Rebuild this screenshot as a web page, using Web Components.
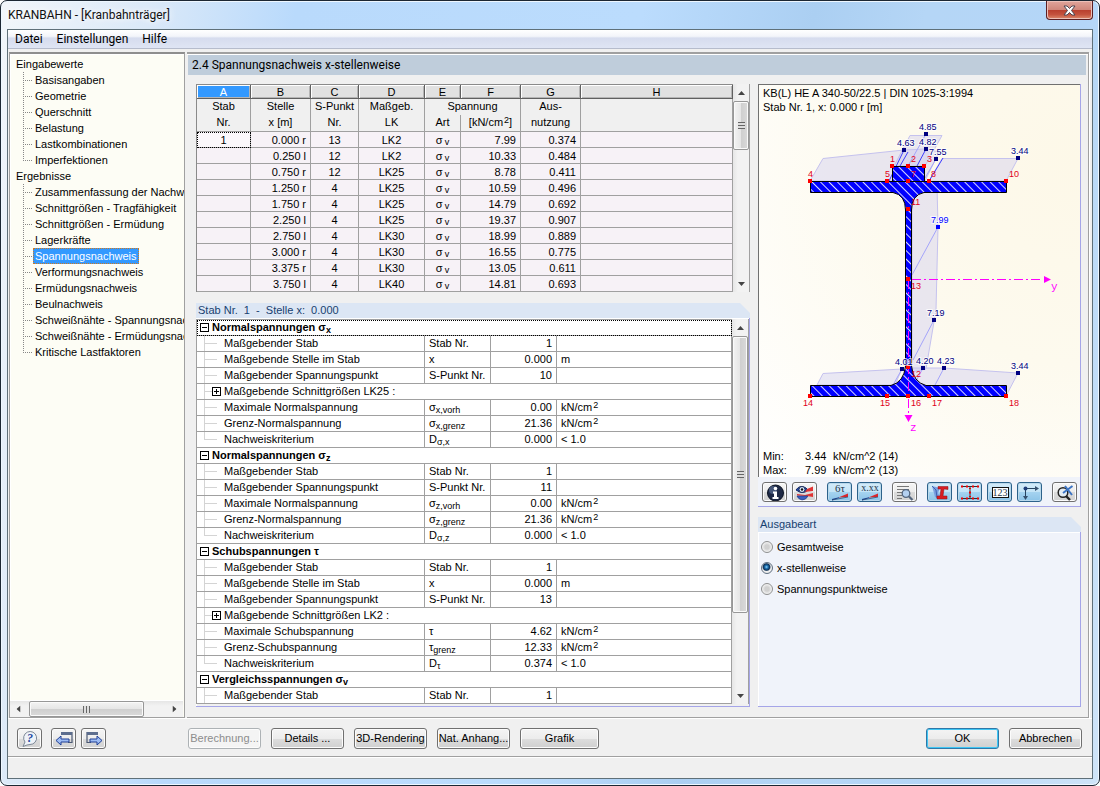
<!DOCTYPE html>
<html lang="de">
<head>
<meta charset="utf-8">
<title>KRANBAHN - [Kranbahnträger]</title>
<style>
  html, body { margin: 0; }
  body { background: #fff; color: #000; font: 11px/16px "Liberation Sans", Arial, sans-serif; }
</style>
</head>
<body>
<kb-window>
  <span slot="title">KRANBAHN - [Kranbahnträger]</span>
  <kb-menubar slot="menu">
    <a href="#datei">Datei</a><a href="#einstellungen">Einstellungen</a><a href="#hilfe">Hilfe</a>
  </kb-menubar>
  <kb-tree slot="nav"></kb-tree>
  <kb-page slot="page">
    <span slot="heading">2.4 Spannungsnachweis x-stellenweise</span>
    <result-table slot="results"></result-table>
    <kb-group slot="details" flush><span slot="caption">Stab Nr.&nbsp; 1&nbsp; -&nbsp; Stelle x:&nbsp; 0.000</span><detail-table></detail-table></kb-group>
    <section-view slot="view"></section-view>
    <kb-group slot="options"><span slot="caption">Ausgabeart</span><output-mode></output-mode></kb-group>
  </kb-page>
  <kb-actions slot="actions"></kb-actions>
</kb-window>

<script>
const define = (name, html, setup) => {
  const t = document.createElement('template');
  t.innerHTML = html;
  customElements.define(name, class extends HTMLElement {
    constructor() {
      super();
      this.attachShadow({ mode: 'open' }).append(t.content.cloneNode(true));
    }
    connectedCallback() { if (setup && !this.ready) { this.ready = true; setup(this.shadowRoot, this); } }
  });
};

/* ---------- window frame ---------- */
define('kb-window', `
<style>
  :host { display: block; }
  .frame { box-sizing: border-box; min-height: 100vh; display: grid; grid-template-rows: 28px 1fr;
    border: 1px solid #1c2733; border-radius: 7px; padding: 0 6px 6px;
    box-shadow: inset 0 0 0 1px #eef7ff;
    background: linear-gradient(100deg, #f2f6fa 0, #dbe9f8 12%, #b9dafc 24%, #bbdcfd 52%, #abcff2 66%, #b5d6f6 75%, #b4d6f7 88%, #cfe4f8 100%); }
  header { display: flex; justify-content: space-between; }
  h1 { margin: 0; padding-left: 1px; font: 12px/28px Roboto, "Noto Sans", sans-serif; color: #111; text-shadow: 0 0 6px #fff, 0 0 8px #fff; }
  button { box-sizing: border-box; width: 47px; height: 19px; padding: 0; border: 1px solid #5b1f22; border-top: 0; border-radius: 0 0 4px 4px;
    background: linear-gradient(#e0a59b 0, #d0877b 48%, #b9402f 52%, #c4523e 75%, #dc8a6c 100%);
    box-shadow: inset 0 0 0 1px #ecc0b8; display: grid; place-items: center; }
  .client { display: grid; grid-template-rows: 19px 1fr 38px 22px; border: 1px solid #5f7079; background: #f0f0f0; min-width: 0; }
  .work { display: grid; grid-template-columns: 176px minmax(0, 1fr); gap: 2px; padding: 3px 3px 0 1px; }
  .status { border-top: 1px solid #a0a0a0; box-shadow: inset 0 1px #fff; box-sizing: border-box; }
  .foot { border-top: 1px solid #fff; box-sizing: border-box; display: grid; }
</style>
<div class="frame">
  <header><h1><slot name="title"></slot></h1>
    <button type="button" aria-label="Schließen"><svg width="13" height="11" viewBox="0 0 13 11"><path d="M1 1h3l2.500 2.500L9 1h3L8.500 5.500 12 10H9L6.500 7.500 4 10H1l3.500-4.500z" fill="#fff" stroke="#4c4652" stroke-width="1"/></svg></button>
  </header>
  <div class="client">
    <slot name="menu"></slot>
    <div class="work"><slot name="nav"></slot><slot name="page"></slot></div>
    <div class="foot"><slot name="actions"></slot></div>
    <div class="status"></div>
  </div>
</div>`);

define('kb-menubar', `
<style>
  :host { display: flex; align-items: center; gap: 14px; padding: 0 7px; border-bottom: 1px solid #b6bccc; box-sizing: border-box;
    background: linear-gradient(#fff 0, #f3f5fa 35%, #d6dcee 45%, #dfe5f4 100%); font: 12px/20px Roboto, "Noto Sans", sans-serif; }
  ::slotted(a) { color: #000; text-decoration: none; }
</style><slot></slot>`);

/* ---------- scroll bar ---------- */
define('kb-scroll', `
<style>
  :host { display: flex; flex-direction: column; background: linear-gradient(90deg, #e6e6e6, #f2f2f2 30%, #f2f2f2); }
  :host([horizontal]) { flex-direction: row; background: linear-gradient(#e6e6e6, #f2f2f2 30%, #f2f2f2); }
  button { flex: none; width: 100%; height: 17px; padding: 0; border: 0; background: none; display: grid; place-items: center; }
  :host([horizontal]) button { width: 17px; height: 100%; }
  :host([horizontal]) svg { transform: rotate(-90deg); }
  .track { flex: 1; min-height: 0; display: flex; flex-direction: inherit; }
  .thumb { box-sizing: border-box; border: 1px solid #979797; border-radius: 2px; box-shadow: inset 0 0 0 1px #fafafa; display: grid; place-items: center;
    background: linear-gradient(90deg, #f3f3f3 0, #e6e6e6 48%, #cfcfcf 52%, #dadada 100%); height: var(--size); }
  :host([horizontal]) .thumb { height: auto; width: var(--size); background: linear-gradient(#f3f3f3 0, #e6e6e6 48%, #cfcfcf 52%, #dadada 100%); margin-left: 2px; }
  .grip { width: 7px; height: 7px; background: repeating-linear-gradient(#666 0 1px, #ddd 1px 3px); }
  :host([horizontal]) .grip { background: repeating-linear-gradient(90deg, #666 0 1px, #ddd 1px 3px); }
</style>
<button type="button" aria-label="Zurück"><svg width="7" height="4"><path d="M0 4L3.500 0 7 4z" fill="#444"/></svg></button>
<div class="track"><div class="thumb"><div class="grip"></div></div></div>
<button type="button" aria-label="Weiter"><svg width="7" height="4"><path d="M0 0L3.500 4 7 0z" fill="#444"/></svg></button>`);

/* ---------- navigation tree ---------- */
const TREE = [
  ['Eingabewerte', ['Basisangaben', 'Geometrie', 'Querschnitt', 'Belastung', 'Lastkombinationen', 'Imperfektionen']],
  ['Ergebnisse', ['Zusammenfassung der Nachwe', 'Schnittgrößen - Tragfähigkeit', 'Schnittgrößen - Ermüdung', 'Lagerkräfte', 'Spannungsnachweis',
    'Verformungsnachweis', 'Ermüdungsnachweis', 'Beulnachweis', 'Schweißnähte - Spannungsnac', 'Schweißnähte - Ermüdungsnac', 'Kritische Lastfaktoren']]
];
define('kb-tree', `
<style>
  :host { display: flex; flex-direction: column; box-sizing: border-box; min-width: 0; border: 1px solid #a0a0a0; border-top: 2px solid #8e8e8e;
    background: #fdfdf5; box-shadow: inset 1px 1px #fff; }
  nav { flex: 1; overflow: hidden; padding: 2px 0 0 6px; }
  ul { list-style: none; margin: 0; padding: 0; white-space: nowrap; }
  li li { display: flex; height: 16px; padding-left: 7px; }
  i { flex: none; width: 10px; background: repeating-linear-gradient(#888 0 1px, transparent 1px 2px) 0 0/1px 100% no-repeat,
      repeating-linear-gradient(90deg, #888 0 1px, transparent 1px 2px) 0 8px/10px 1px no-repeat; }
  li li:last-child i { background-size: 1px 9px, 10px 1px; }
  a { flex: none; color: #000; text-decoration: none; padding: 0 2px; height: 16px; box-sizing: border-box; }
  a[aria-current] { background: #39f; color: #fff; outline: 1px dotted #d07a20; outline-offset: -1px; }
  kb-scroll { --size: 83%; height: 17px; margin-right: 1px; border-top: 1px solid #fff; box-sizing: border-box; }
</style>
<nav><ul></ul></nav><kb-scroll horizontal></kb-scroll>`, root => {
  root.querySelector('ul').innerHTML = TREE.map(([g, items]) =>
    `<li><span>${g}</span><ul>${items.map(t => `<li><i></i><a href="#"${t === 'Spannungsnachweis' ? ' aria-current="page"' : ''}>${t}</a></li>`).join('')}</ul></li>`).join('');
});

/* ---------- page ---------- */
define('kb-page', `
<style>
  :host { display: flex; flex-direction: column; min-width: 0; border: solid #a0a0a0; border-width: 2px 1px 1px 0; padding: 1px 1px 10px 1px; box-shadow: inset 0 1px #fff, 1px 1px #fff; }
  h2 { margin: 0 1px 0 0; padding: 0 4px; background: #bfcddb; font: 12px/20px Roboto, "Noto Sans", sans-serif; }
  .cols { flex: 1; display: grid; grid-template-columns: minmax(0, 1fr) 323px; gap: 8px; padding: 9px 6px 0 8px; }
  .col { display: flex; flex-direction: column; gap: 11px; min-width: 0; }
  .right { gap: 10px; }
  ::slotted([slot=options]), ::slotted([slot=details]) { flex: 1; }
</style>
<h2><slot name="heading"></slot></h2>
<div class="cols">
  <div class="col"><slot name="results"></slot><slot name="details"></slot></div>
  <div class="col right"><slot name="view"></slot><slot name="options"></slot></div>
</div>`);

define('kb-group', `
<style>
  :host { display: flex; flex-direction: column; min-width: 0; }
  .cap { background: #dce6f4; color: #173f70; line-height: 15px; padding: 0 2px; clip-path: polygon(0 0, calc(100% - 10px) 0, 100% 10px, 100% 100%, 0 100%); }
  .body { flex: 1; border: solid #a5a5e8; border-width: 0 1px 1px 0; background: #f0f3fa; box-shadow: inset 1px 1px #fff; }
  :host([flush]) .body { background: #f0f0f0; padding: 1px 0 2px; }
</style>
<div class="cap"><slot name="caption"></slot></div><div class="body"><slot></slot></div>`);

/* ---------- result table ---------- */
const RESULTS = `1|0.000 r|13|LK2|7.99|0.374
|0.250 l|12|LK2|10.33|0.484
|0.750 r|12|LK25|8.78|0.411
|1.250 r|4|LK25|10.59|0.496
|1.750 r|4|LK25|14.79|0.692
|2.250 l|4|LK25|19.37|0.907
|2.750 l|4|LK30|18.99|0.889
|3.000 r|4|LK30|16.55|0.775
|3.375 r|4|LK30|13.05|0.611
|3.750 l|4|LK40|14.81|0.693`.split('\n').map(r => r.split('|'));
define('result-table', `
<style>
  :host { display: flex; }
  table { flex: 1; width: 100%; min-width: 0; table-layout: fixed; border-collapse: separate; border-spacing: 0; border: solid #8a8a8a; border-width: 1px 0 0 1px; }
  th, td { box-sizing: border-box; padding: 1px 4px 0; height: 16px; line-height: 14px; font-weight: normal; text-align: center; overflow: hidden; white-space: nowrap; border: solid #a0a0a0; border-width: 0 1px 1px 0; }
  .letters th { height: 14px; line-height: 12px; padding: 0; background: #e1e1e1; border-color: #606060; box-shadow: inset 1px 1px #fff, inset -1px -1px #b5b5b5; }
  .letters th:first-child { background: #39f; color: #fff; }
  .heads th { background: #f0f0f0; padding: 0 0 2px; line-height: 14px; border-bottom: 0; }
  .units th { height: 17px; line-height: 14px; background: #f0f0f0; padding: 0 0 2px; }
  tbody td { background: #f7f2f7; }
  td.n { text-align: right; padding-right: 4px; }
  td.focus { outline: 1px dotted #000; outline-offset: -1px; background: #fbf8fb; }
  sub, sup { font-size: 9px; line-height: 0; }
  sub { vertical-align: -1px; margin-left: 2px; }
  sup { vertical-align: 3px; margin-left: 1px; }
  kb-scroll { --size: 28%; width: 17px; flex: none; border-right: 1px solid #a0a0a0; box-sizing: border-box; }
</style>
<table>
  <colgroup><col style="width:54px"><col style="width:60px"><col style="width:48px"><col style="width:66px"><col style="width:36px"><col style="width:60px"><col style="width:60px"><col></colgroup>
  <thead>
    <tr class="letters"><th>A</th><th>B</th><th>C</th><th>D</th><th>E</th><th>F</th><th>G</th><th>H</th></tr>
    <tr class="heads"><th>Stab</th><th>Stelle</th><th>S-Punkt</th><th>Maßgeb.</th><th colspan="2">Spannung</th><th>Aus-</th><th></th></tr>
    <tr class="units"><th>Nr.</th><th>x [m]</th><th>Nr.</th><th>LK</th><th>Art</th><th>[kN/cm<sup>2</sup>]</th><th>nutzung</th><th></th></tr>
  </thead>
  <tbody></tbody>
</table>
<kb-scroll></kb-scroll>`, root => {
  root.querySelector('tbody').innerHTML = RESULTS.map(([a, b, c, d, f, g], i) =>
    `<tr><td${i ? '' : ' class="focus"'}>${a}</td><td class="n">${b}</td><td>${c}</td><td>${d}</td><td>σ<sub>v</sub></td><td class="n">${f}</td><td class="n">${g}</td><td></td></tr>`).join('');
});

/* ---------- detail table ---------- */
const KN = 'kN/cm<sup>2</sup>', STAB = ['Maßgebender Stab', 'Stab Nr.', '1', ''];
const SPANNUNGSPUNKT = n => ['Maßgebender Spannungspunkt', 'S-Punkt Nr.', n, ''];
const STELLE = ['Maßgebende Stelle im Stab', 'x', '0.000', 'm'];
const DETAILS = [
  ['Normalspannungen σ<sub>x</sub>', [STAB, STELLE, SPANNUNGSPUNKT('10'), ['Maßgebende Schnittgrößen LK25 :'],
    ['Maximale Normalspannung', 'σ<sub>x,vorh</sub>', '0.00', KN], ['Grenz-Normalspannung', 'σ<sub>x,grenz</sub>', '21.36', KN], ['Nachweiskriterium', 'D<sub>σ,x</sub>', '0.000', '&lt; 1.0']]],
  ['Normalspannungen σ<sub>z</sub>', [STAB, SPANNUNGSPUNKT('11'),
    ['Maximale Normalspannung', 'σ<sub>z,vorh</sub>', '0.00', KN], ['Grenz-Normalspannung', 'σ<sub>z,grenz</sub>', '21.36', KN], ['Nachweiskriterium', 'D<sub>σ,z</sub>', '0.000', '&lt; 1.0']]],
  ['Schubspannungen τ', [STAB, STELLE, SPANNUNGSPUNKT('13'), ['Maßgebende Schnittgrößen LK2 :'],
    ['Maximale Schubspannung', 'τ', '4.62', KN], ['Grenz-Schubspannung', 'τ<sub>grenz</sub>', '12.33', KN], ['Nachweiskriterium', 'D<sub>τ</sub>', '0.374', '&lt; 1.0']]],
  ['Vergleichsspannungen σ<sub>v</sub>', [STAB]]
];
define('detail-table', `
<style>
  :host { display: flex; }
  table { flex: 1; width: 100%; min-width: 0; table-layout: fixed; border-collapse: separate; border-spacing: 0; background: #fff; border: solid #a0a0a0; border-width: 1px 0 0 1px; }
  td, th { box-sizing: border-box; height: 16px; line-height: 15px; padding: 0 4px; text-align: left; font-weight: normal; overflow: hidden; white-space: nowrap; border: solid #a0a0a0; border-width: 0 1px 1px 0; }
  .g th { font-weight: bold; padding-left: 3px; }
  .first th { outline: 1px dotted #000; outline-offset: -1px; }
  .v { text-align: right; }
  .k { padding-left: 0; }
  .f { display: flex; align-items: center; height: 15px; }
  .box { width: 9px; height: 9px; box-sizing: border-box; border: 1px solid #000; flex: none; margin-right: 3px;
    background: linear-gradient(#000, #000) center/5px 1px no-repeat; }
  .plus { background: linear-gradient(#000, #000) center/5px 1px no-repeat, linear-gradient(#000, #000) center/1px 5px no-repeat; }
  .guide { flex: none; width: 27px; height: 15px; background: linear-gradient(#d4d4d4, #d4d4d4) 7px 0/1px 100% no-repeat, linear-gradient(#d4d4d4, #d4d4d4) 8px 7px/12px 1px no-repeat; }
  .short { width: 15px; background-size: 1px 100%, 7px 1px; }
  .last .guide { background-size: 1px 8px, 12px 1px; }
  sub, sup { font-size: 9px; line-height: 0; }
  sub { vertical-align: -2px; }
  sup { vertical-align: 3px; margin-left: 1px; }
  kb-scroll { --size: 79%; width: 17px; flex: none; border-right: 1px solid #a0a0a0; box-sizing: border-box; }
</style>
<table><colgroup><col style="width:228px"><col style="width:66px"><col style="width:66px"><col></colgroup><tbody></tbody></table><kb-scroll></kb-scroll>`, root => {
  root.querySelector('tbody').innerHTML = DETAILS.map(([title, rows], gi) =>
    `<tr class="g${gi ? '' : ' first'}"><th colspan="4" scope="rowgroup"><div class="f"><span class="box"></span><span>${title}</span></div></th></tr>` +
    rows.map((r, i) => r.length === 1
      ? `<tr><td class="k" colspan="4"><div class="f"><span class="guide short"></span><span class="box plus"></span><span>${r[0]}</span></div></td></tr>`
      : `<tr${i === rows.length - 1 && gi < 3 ? ' class="last"' : ''}><td class="k"><div class="f"><span class="guide"></span><span>${r[0]}</span></div></td><td>${r[1]}</td><td class="v">${r[2]}</td><td>${r[3]}</td></tr>`).join('')).join('');
});

/* ---------- icons ---------- */
const lens = (x, y) => `<circle cx="${x}" cy="${y}" r="3.800" fill="#b4d0f0" stroke="#53657e" stroke-width="1.300"/><path d="M${x + 3} ${y + 3}l3.500 3.500" stroke="#53657e" stroke-width="2.200"/>`;
const diagram = '<path d="M11 14.300L20 10.500v3.500l-9 .500z" fill="#d8262a"/><path d="M4 17.500v-1.500l7-1.700v.7z" fill="#16388c"/><path d="M4 17L20 14" stroke="#2f5078" stroke-width=".8"/>';
const ICONS = {
  info: '<circle cx="12.500" cy="10" r="8" fill="#1e2946" stroke="#0d1424"/><circle cx="10" cy="7" r="4" fill="#56698f" opacity=".7"/><path d="M10 8.500h4V14h1.500v2h-6v-2H11v-3.500h-1z" fill="#fff"/><circle cx="12.500" cy="5.500" r="1.800" fill="#fff"/>',
  eye: '<path d="M3 7q4-6 10-2l2 2q-5 5-12 0z" fill="#2448a6" stroke="#152a66"/><circle cx="9" cy="6.500" r="3" fill="#dcecff" stroke="#1c2e5a"/><circle cx="9" cy="6.500" r="1.200" fill="#111"/><path d="M14 6l6-2.500v4.500l-8 1z" fill="#e03434"/><path d="M4 11l8 1 8-2v4l-6-1-10-.5z" fill="#e03434"/><path d="M4 13h11q-2 4-6 4-4-1-5-4z" fill="#3a5fc0" stroke="#1c327c" stroke-width=".6"/>',
  sigma: diagram, values: diagram,
  preview: '<path d="M4 3.500h12M4 6.500h12M4 9.500h6M4 12.500h5M4 15.500h5" stroke="#777"/>' + lens(13, 10.5),
  section: '<path d="M4 3l8 2-2 5 3 6-6-2z" fill="#7a9fe0"/><path d="M4 3l4 4 1 8" stroke="#3d63b0" fill="none"/><path d="M10 3.500h10v3l-4-.5-1 7h4v3h-10v-3h3l1-7h-3z" fill="#d81c22" stroke="#8c1014" stroke-width=".5"/>',
  points: '<path d="M4 3.500h16M12 3.500v12M4 15.500h16" stroke="#333"/><path d="M3 2.500h2v2H3zM8 2.500h2v2H8zM14 2.500h2v2h-2zM19 2.500h2v2h-2zM11 8.500h2v2h-2zM11 5h2v1h-2zM11 13h2v1h-2zM3 14.500h2v2H3zM8 14.500h2v2H8zM14 14.500h2v2h-2zM19 14.500h2v2h-2z" fill="#f00000"/>',
  numbers: '<rect x="4.500" y="4.500" width="16" height="10" fill="#fff" stroke="#111"/>',
  axes: '<path d="M7.500 5.500h11M7.500 5.500v9" stroke="#27435f"/><path d="M17 3l4 2.500L17 8zM5 13h5l-2.500 4z" fill="#35506e"/><circle cx="7.500" cy="5.500" r="2" fill="#1d3c78"/>',
  reset: '<circle cx="10" cy="9.500" r="4.800" fill="#e4ecf3" stroke="#222" stroke-width="1.500"/><path d="M13 13l4 4" stroke="#222" stroke-width="2.400"/><path d="M12 3l7 9M19.500 3L10 10" stroke="#3c74c4" stroke-width="2"/>',
  help: '<path d="M9 16l-4 1.500 2-4.500a6.500 6.500 0 1 1 5 2.500z" fill="#eef2f8" stroke="#7d8896"/>',
  back: '<path d="M9 3.500h11v10h-4" fill="none" stroke="#4a5872" stroke-width="1.200"/><path d="M9 3h11v3H9z" fill="#5c6d8e"/><path d="M4 11.500l5-4.500v3h8v3H9v3z" fill="#9dbcf4" stroke="#1f3f96"/>',
  next: '<path d="M16 3.500H5v10h4" fill="none" stroke="#4a5872" stroke-width="1.200"/><path d="M5 3h11v3H5z" fill="#5c6d8e"/><path d="M20 11.500l-5-4.500v3H8v3h7v3z" fill="#9dbcf4" stroke="#1f3f96"/>'
};
const ICON_TEXT = {
  sigma: ['6τ', 12, 9, 11], values: ['x.xx', 12, 8, 10], numbers: ['123', 12, 13, 10], help: ['?', 12, 13, 12]
};
define('icon-button', `
<style>
  :host { display: block; }
  button { box-sizing: border-box; width: 25px; height: 20px; padding: 0; border: 1px solid #707070; border-radius: 3px; display: grid; place-items: center;
    background: linear-gradient(#f5f5f5 0, #ececec 50%, #dcdcdc 50%, #d2d2d2 100%); box-shadow: inset 0 0 0 1px #fcfcfc; overflow: hidden; }
  :host([tall]) button { height: 21px; }
  :host([pressed]) button { border-color: #2c628b; background: linear-gradient(#d3ebf9 0, #c3e4f7 50%, #a5d3f0 50%, #8cc4e8 100%); box-shadow: inset 0 0 0 1px #b9d9ec; }
  svg { display: block; }
  text { font-family: "Liberation Serif", serif; text-anchor: middle; fill: #26374c; }
  :host([icon=help]) text { fill: #2347a0; font-weight: bold; font-style: italic; }
</style><button type="button"><svg width="25" height="20" viewBox="0 0 25 20"></svg></button>`, (root, el) => {
  const n = el.getAttribute('icon'), t = ICON_TEXT[n];
  root.querySelector('button').setAttribute('aria-label', n);
  if (el.hasAttribute('pressed')) root.querySelector('button').setAttribute('aria-pressed', 'true');
  root.querySelector('svg').innerHTML = ICONS[n] + (t ? `<text x="${t[1]}" y="${t[2]}" font-size="${t[3]}">${t[0]}</text>` : '');
});

/* ---------- cross section with stresses ---------- */
const REDS = [[1, 892, 166, 890, 162], [2, 908, 166, 911, 162], [3, 924, 166, 927, 162], [4, 810, 181, 808, 177], [5, 887, 181, 885, 177], [7, 908, 181, 911, 177],
  [8, 929, 181, 931, 177], [10, 1006, 181, 1009, 177], [11, 908, 209, 911, 205], [13, 908, 279, 911, 289], [12, 908, 367, 911, 377],
  [14, 810, 396, 803, 406], [15, 887, 396, 880, 406], [16, 908, 396, 911, 406], [17, 929, 396, 932, 406], [18, 1006, 396, 1009, 406]];
const BLUES = [['4.85', 926, 134, 919, 130], ['4.63', 904, 150, 897, 146], ['4.82', 926, 149, 919, 145], ['7.55', 936, 159, 929, 155], ['3.44', 1018, 158, 1011, 154],
  ['7.99', 938, 227, 931, 223, '#00f'], ['7.19', 934, 320, 927, 316], ['4.01', 902, 369, 895, 365], ['4.20', 923, 368, 916, 364], ['4.23', 944, 368, 937, 364], ['3.44', 1018, 373, 1011, 369]];
define('section-view', `
<style>
  :host { display: block; border: solid #a5a5e8; border-width: 0 1px 1px 0; background: #f0f3fa; }
  .canvas { border: solid #707070; border-width: 1px 0 0 1px; background: radial-gradient(circle at 100% 20%, #fdf8e8 0, #fdfaee 45%, #fff 100%); }
  svg { display: block; width: 100%; height: auto; }
  svg text { font: 9px "Liberation Sans", Arial, sans-serif; }
  svg .big { font-size: 11px; }
  svg .axis { font: 11px "Liberation Mono", monospace; fill: #f0f; }
  .poly { fill: #c9c5f0; fill-opacity: .38; stroke: #c5c2ee; }
  .ray { stroke: #a4a4fa; }
  .hot { stroke: #4040ff; }
  .bar { display: flex; gap: 5px; padding: 5px 4px 4px; }
  .gap { margin-left: 5px; }
</style>
<div class="canvas"><svg viewBox="759 85 321 392" role="img" aria-label="Querschnitt mit Spannungsverlauf">
  <defs><pattern id="h" width="6" height="6" patternUnits="userSpaceOnUse" patternTransform="rotate(-45)"><rect width="6" height="6" fill="#00f"/><path d="M1.500 0v6" stroke="#d8d8ff" stroke-width="1"/></pattern></defs>
  <g class="poly">
    <path d="M810 181L823 158.500 904 150 926 149 939 152 925 181z"/><path d="M894 166L910 135.500H942L925 166z"/>
    <path d="M929 181L942 158.500H1018L1006 181z"/><path d="M912 192L937 186 938 227 936 310 926 369 912 372z"/>
    <path d="M817 385L823 373.500 902 369 895 385z"/><path d="M912 368H944L1018 373 1006 396 912 385z"/>
  </g>
  <path class="ray" d="M912 275L938 227M913 360L934 320M923 368L914 385M944 368L935 385M902 369L893 385M908 166L926 134M925 178L936 159" fill="none"/>
  <path class="hot" d="M889 181L904 150M917 166L926 149M929 181L943 158M900 166L908 152" fill="none"/>
  <path d="M810.500 181.500H892.500V166.500H924.500V181.500H1006.500V192.500H924Q911.500 195 911.500 210V366Q913 382 926 385.500H1006.500V396.500H810.500V385.500H891Q904 382 905.500 366V210Q905.500 195 893 192.500H810.500z" fill="url(#h)" stroke="#000"/>
  <path d="M892 181.500H925" stroke="#000"/>
  <path d="M912 279.500H1043" stroke="#f0f" stroke-dasharray="9 3 2 3"/><path d="M908.500 280V416" stroke="#f0f" stroke-dasharray="9 3 2 3"/>
  <path d="M1044 276v7l7-3.500zM904.500 415h8l-4 7z" fill="#f0f"/>
  <text class="axis" x="1051" y="290">y</text><text class="axis" x="910" y="431">z</text>
  <g id="r"></g><g id="b"></g>
  <text class="big" x="763" y="97">KB(L) HE A 340-50/22.5 | DIN 1025-3:1994</text><text class="big" x="763" y="111">Stab Nr. 1, x: 0.000 r [m]</text>
  <text class="big" x="763" y="460">Min:</text><text class="big" x="805" y="460">3.44</text><text class="big" x="833" y="460">kN/cm^2 (14)</text>
  <text class="big" x="763" y="474">Max:</text><text class="big" x="805" y="474">7.99</text><text class="big" x="833" y="474">kN/cm^2 (13)</text>
</svg></div>
<div class="bar"><icon-button icon="info"></icon-button><icon-button icon="eye"></icon-button><icon-button icon="sigma" pressed class="gap"></icon-button><icon-button icon="values" pressed></icon-button><icon-button icon="preview" class="gap"></icon-button><icon-button icon="section" pressed class="gap"></icon-button><icon-button icon="points" pressed></icon-button><icon-button icon="numbers" pressed></icon-button><icon-button icon="axes" pressed></icon-button><icon-button icon="reset" class="gap"></icon-button></div>`, root => {
  root.querySelector('#r').innerHTML = REDS.map(([n, x, y, tx, ty]) => `<rect x="${x - 2}" y="${y - 2}" width="4" height="4" fill="#f00"/><text x="${tx}" y="${ty}" fill="#e00020">${n}</text>`).join('');
  root.querySelector('#b').innerHTML = BLUES.map(([n, x, y, tx, ty, c]) => `<rect x="${x - 2}" y="${y - 2}" width="4" height="4" fill="${c || '#000080'}"/><text x="${tx}" y="${ty}" fill="${c || '#000080'}" stroke="#fff" stroke-width="2" stroke-opacity=".8" paint-order="stroke">${n}</text>`).join('');
});

/* ---------- output mode ---------- */
define('output-mode', `
<style>
  :host { display: block; }
  fieldset { margin: 0; border: 0; padding: 7px 3px; display: grid; gap: 5px; justify-items: start; }
  label { display: flex; align-items: center; gap: 4px; height: 16px; }
  input { appearance: none; margin: 0; width: 12px; height: 12px; box-sizing: border-box; border: 1px solid #8e8f8f; border-radius: 50%; background: radial-gradient(circle, #d0d0d0 30%, #f4f4f4 70%); }
  input:checked { background: radial-gradient(circle at 45% 40%, #8fd4ff 0, #1b6fae 20%, #0d2f55 40%, #eee 55%); border-color: #5f6f80; }
</style>
<fieldset aria-label="Ausgabeart">
  <label><input type="radio" name="mode"><span>Gesamtweise</span></label>
  <label><input type="radio" name="mode" checked><span>x-stellenweise</span></label>
  <label><input type="radio" name="mode"><span>Spannungspunktweise</span></label>
</fieldset>`);

/* ---------- bottom buttons ---------- */
define('kb-actions', `
<style>
  :host { display: flex; align-items: center; padding: 1px 10px 0 9px; }
  .icons, .tools, .end { display: flex; gap: 10px; }
  .icons { width: 171px; gap: 5px; box-sizing: border-box; }
  .icons :nth-child(2) { margin-left: 4px; }
  .tools { flex: 1; }
  button { box-sizing: border-box; width: 73px; height: 21px; padding: 0; white-space: nowrap; font: inherit; color: #000; border: 1px solid #707070; border-radius: 3px;
    background: linear-gradient(#f4f4f4 0, #ececec 50%, #dddddd 50%, #d0d0d0 100%); box-shadow: inset 0 0 0 1px #fcfcfc; }
  .wide { width: 79px; }
  button:disabled { color: #8c8c8c; border-color: #adb2b5; background: #f4f4f4; }
  .ok { border-color: #2f78a8; box-shadow: inset 0 0 0 1px #3fc6f4; }
</style>
<div class="icons"><icon-button icon="help" tall></icon-button><icon-button icon="back" tall></icon-button><icon-button icon="next" tall></icon-button></div>
<div class="tools"><button type="button" disabled>Berechnung...</button><button type="button">Details ...</button><button type="button">3D-Rendering</button><button type="button">Nat. Anhang...</button><button type="button" class="wide">Grafik</button></div>
<div class="end"><button type="button" class="ok">OK</button><button type="button">Abbrechen</button></div>`);
</script>
</body>
</html>
